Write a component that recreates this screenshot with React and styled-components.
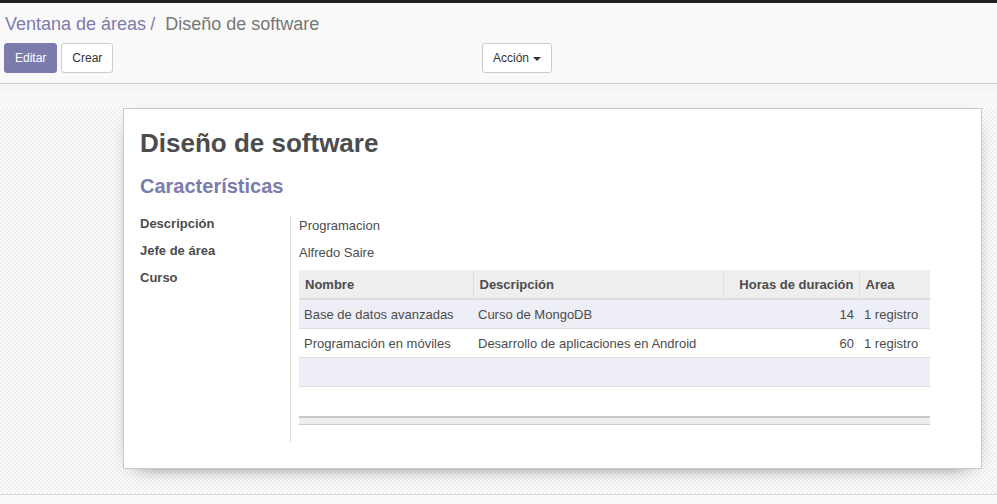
import React from "react";
import styled, { createGlobalStyle } from "styled-components";

const GlobalStyle = createGlobalStyle`
  html, body { margin: 0; padding: 0; }
  body {
    font-family: "Liberation Sans", Arial, sans-serif;
    font-size: 13px;
    color: #4c4c4c;
    background: #f9f9f9;
  }
`;

const Page = styled.div`
  display: flex;
  flex-direction: column;
  min-height: 504px;
`;

const TopBar = styled.div`
  height: 3px;
  background: #212121;
`;

const ControlPanel = styled.div`
  background: #f9f9f9;
  border-bottom: 1px solid #cccccc;
  padding: 11px 0 10px 4px;
  display: flex;
  flex-direction: column;
  gap: 9px;
`;

const Breadcrumb = styled.div`
  display: flex;
  align-items: center;
  font-size: 18px;
  line-height: 20px;
  padding-left: 1px;
`;

const Crumb = styled.span`
  color: ${(p) => (p.$active ? "#777777" : "#7c7bad")};
`;

const Sep = styled.span`
  color: #7c7bad;
  padding: 0 10px 0 4px;
`;

const ButtonRow = styled.div`
  display: grid;
  grid-template-columns: 478px 1fr;
`;

const ButtonGroup = styled.div`
  display: flex;
  gap: 4px;
`;

const Button = styled.button`
  height: 30px;
  padding: 0 10px;
  font-family: "Liberation Sans", Arial, sans-serif;
  font-size: 12px;
  border-radius: 3px;
  border: 1px solid ${(p) => (p.$primary ? "#7c7bad" : "#cccccc")};
  background: ${(p) => (p.$primary ? "#7c7bad" : "#ffffff")};
  color: ${(p) => (p.$primary ? "#ffffff" : "#333333")};
  display: inline-flex;
  align-items: center;
  gap: 4px;
  cursor: pointer;
`;

const Caret = styled.span`
  display: inline-block;
  width: 0;
  height: 0;
  border-left: 4px solid transparent;
  border-right: 4px solid transparent;
  border-top: 4px solid #333333;
  margin-top: 1px;
`;

const StatusBand = styled.div`
  height: 24px;
  background: linear-gradient(#f3f3f3, #f7f7f7 40%, #f7f7f7);
`;

const SheetBg = styled.div`
  background-color: #f8f8f8;
  background-image: repeating-conic-gradient(#efefef 0 25%, #fbfbfb 0 50%);
  background-size: 4px 4px;
  border-bottom: 1px solid #dcdcdc;
  padding: 0 15px 25px 123px;
`;

const Sheet = styled.div`
  background: #ffffff;
  border: 1px solid #c9c8d6;
  box-shadow: 0 6px 20px -14px #000000;
  padding: 19px 51px 26px 16px;
`;

const Title = styled.h1`
  margin: 0;
  font-size: 26px;
  line-height: 30px;
  font-weight: bold;
  color: #4c4c4c;
`;

const Section = styled.h2`
  margin: 17px 0 18px;
  font-size: 20px;
  line-height: 22px;
  font-weight: bold;
  color: #7c7bad;
`;

const Group = styled.div`
  display: flex;
`;

const LabelCol = styled.div`
  width: 150px;
  flex: none;
  display: flex;
  flex-direction: column;
  gap: 9px;
`;

const Label = styled.div`
  font-weight: bold;
  line-height: 18px;
`;

const ValueCol = styled.div`
  flex: 1;
  border-left: 1px solid #dddddd;
  margin-top: 1px;
  padding: 1px 0 17px 8px;
  display: flex;
  flex-direction: column;
`;

const Value = styled.div`
  line-height: 18px;
  margin-bottom: 9px;
`;

const Table = styled.table`
  width: 100%;
  border-collapse: collapse;
  margin-top: -1px;
  table-layout: fixed;
`;

const Th = styled.th`
  background: #eeeeee;
  height: 28px;
  padding: 0 5px 0 6px;
  font-weight: bold;
  text-align: ${(p) => (p.$right ? "right" : "left")};
  border-bottom: 2px solid #dddddd;
  border-left: ${(p) => (p.$first ? "none" : "1px solid #dedede")};
  white-space: nowrap;
`;

const Tr = styled.tr`
  background: ${(p) => (p.$odd ? "#eeeef6" : "#ffffff")};
`;

const Td = styled.td`
  height: 28px;
  padding: 0 5px 0 5px;
  text-align: ${(p) => (p.$right ? "right" : "left")};
  border-top: 1px solid #dddddd;
  border-bottom: 1px solid #dddddd;
  white-space: nowrap;
`;

const TableFooter = styled.div`
  margin-top: 29px;
  height: 6px;
  background: #eeeeee;
  border-top: 2px solid #c8c8c8;
  border-bottom: 1px solid #cccccc;
`;

const Filler = styled.div`
  flex: 1;
  background: #f9f9f9;
`;

const rows = [
  { name: "Base de datos avanzadas", desc: "Curso de MongoDB", hours: 14, area: "1 registro" },
  { name: "Programación en móviles", desc: "Desarrollo de aplicaciones en Android", hours: 60, area: "1 registro" },
];

export default function App() {
  return (
    <>
      <GlobalStyle />
      <Page>
        <TopBar />
        <ControlPanel>
          <Breadcrumb>
            <Crumb>Ventana de áreas</Crumb>
            <Sep>/</Sep>
            <Crumb $active>Diseño de software</Crumb>
          </Breadcrumb>
          <ButtonRow>
            <ButtonGroup>
              <Button $primary>Editar</Button>
              <Button>Crear</Button>
            </ButtonGroup>
            <ButtonGroup>
              <Button>
                Acción <Caret />
              </Button>
            </ButtonGroup>
          </ButtonRow>
        </ControlPanel>
        <StatusBand />
        <SheetBg>
          <Sheet>
            <Title>Diseño de software</Title>
            <Section>Características</Section>
            <Group>
              <LabelCol>
                <Label>Descripción</Label>
                <Label>Jefe de área</Label>
                <Label>Curso</Label>
              </LabelCol>
              <ValueCol>
                <Value>Programacion</Value>
                <Value>Alfredo Saire</Value>
                <Table>
                  <colgroup>
                    <col style={{ width: 174 }} />
                    <col style={{ width: 250 }} />
                    <col style={{ width: 136 }} />
                    <col />
                  </colgroup>
                  <thead>
                    <tr>
                      <Th $first>Nombre</Th>
                      <Th>Descripción</Th>
                      <Th $right>Horas de duración</Th>
                      <Th>Area</Th>
                    </tr>
                  </thead>
                  <tbody>
                    {rows.map((r, i) => (
                      <Tr key={r.name} $odd={i % 2 === 0}>
                        <Td>{r.name}</Td>
                        <Td>{r.desc}</Td>
                        <Td $right>{r.hours}</Td>
                        <Td>{r.area}</Td>
                      </Tr>
                    ))}
                    <Tr $odd>
                      <Td />
                      <Td />
                      <Td />
                      <Td />
                    </Tr>
                  </tbody>
                </Table>
                <TableFooter />
              </ValueCol>
            </Group>
          </Sheet>
        </SheetBg>
        <Filler />
      </Page>
    </>
  );
}
